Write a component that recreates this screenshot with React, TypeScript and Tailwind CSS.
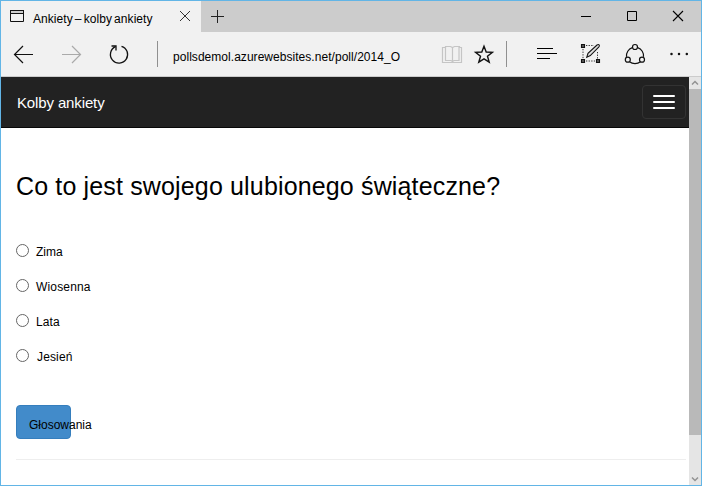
import React from "react";

type IconProps = { className: string; box: string; children: React.ReactNode };

function Icon({ className, box, children }: IconProps) {
  return (
    <svg viewBox={box} className={`block shrink-0 ${className}`} fill="none" stroke="#111" strokeWidth="1.2">
      {children}
    </svg>
  );
}

function TitleBar() {
  return (
    <div className="flex h-[31px] shrink-0 bg-[#cccccc]">
      <div className="flex w-[200px] shrink-0 bg-[#f1f1f1]">
        <Icon className="h-[31px] w-8" box="1 1 32 31">
          <path d="M10.5 10v11.5h13V10" strokeWidth="1" />
          <path d="M10 10.5h14M10 13.5h14" strokeWidth="1" />
          <path d="M11 12h12" stroke="#aaa" strokeWidth="1" />
        </Icon>
        <span className="w-[141px] whitespace-pre pt-[10px] text-[12px] leading-4 tracking-[0.06px] text-black [word-spacing:-1.3px]">Ankiety – kolby ankiety</span>
        <Icon className="h-[31px] w-[27px]" box="174 1 27 31">
          <path d="M180 11l10 10M190 11l-10 10" stroke="#333" strokeWidth="1" />
        </Icon>
      </div>
      <Icon className="h-[31px] w-8" box="201 1 32 31">
        <path d="M211 16.5h13M217.500 10v13" stroke="#222" strokeWidth="1" />
      </Icon>
      <Icon className="ml-auto h-[31px] w-[138px]" box="563 1 138 31">
        <path d="M581 16.500h10" stroke="#000" strokeWidth="1" />
        <path d="M627.500 11.500h9v9h-9z" stroke="#000" strokeWidth="1" />
        <path d="M673 11l10 10M683 11l-10 10" stroke="#000" strokeWidth="1.1" />
      </Icon>
    </div>
  );
}

function Toolbar() {
  return (
    <div className="flex h-[45px] shrink-0 border-b border-[#cccccc] bg-[#f1f1f1]">
      <Icon className="h-11 w-[45px]" box="1 32 45 44">
        <path d="M33 54.500H14.500M23 46l-8.500 8.500L23 63" />
      </Icon>
      <Icon className="h-11 w-[46px]" box="46 32 46 44">
        <path d="M62 54.500h18.500M72 46l8.500 8.500L72 63" stroke="#aaa" />
      </Icon>
      <Icon className="h-11 w-[52px]" box="92 32 52 44">
        <path d="M121.500 46.300A8.600 8.600 0 1 1 115.500 46.700" strokeWidth="1.3" />
        <path d="M111.500 46h4.500v4.500" strokeWidth="1.300" />
      </Icon>
      <Icon className="h-11 w-[29px]" box="144 32 29 44">
        <path d="M157.500 41v26" stroke="#909090" strokeWidth="1" />
      </Icon>
      <span className="w-[262px] whitespace-nowrap pt-[17px] text-[12px] leading-4 tracking-[0.04px] text-black">pollsdemol.azurewebsites.net/poll/2014_O</span>
      <Icon className="h-11 w-[34px]" box="435 32 34 44">
        <path d="M442.500 47.500h3v-1h5l2 1 2-1h5v1h2v15h-19z" stroke="#c5c5c5" />
        <path d="M445.500 47v13.500h5.500l1.500 1 1.500-1h5V47M452.500 47.500v14.500" stroke="#c5c5c5" />
      </Icon>
      <Icon className="h-11 w-[31px]" box="469 32 31 44">
        <path d="M484 46.200l2.200 5.800 6.200.3-4.900 3.900 1.700 6-5.200-3.400-5.200 3.400 1.700-6-4.900-3.900 6.200-.3z" strokeWidth="1.400" />
      </Icon>
      <Icon className="h-11 w-[25px]" box="500 32 25 44">
        <path d="M506.500 41v26" stroke="#909090" strokeWidth="1" />
      </Icon>
      <Icon className="h-11 w-[45px]" box="525 32 45 44">
        <path d="M537 48.500h16M537 53.500h20M537 58.500h13" stroke="#000" strokeWidth="1" />
      </Icon>
      <Icon className="h-11 w-[44px]" box="570 32 44 44">
        <path d="M586 45.500h8M583 49v10M586 61h9M597.500 52v7" stroke="#333" strokeWidth="1" strokeDasharray="1.300 1.300" />
        <path d="M581.500 44.500h3v3h-3zM581.500 59.500h3v3h-3zM596.500 59.500h3v3h-3z" fill="#555" strokeWidth="1.100" />
        <path d="M586.800 57.200l1.200-3.900 9-8.300q1.500-1 2.200 0 .6.900-.5 2.100l-8.400 8.500z" fill="#ddd" strokeWidth="1.100" />
      </Icon>
      <Icon className="h-11 w-[42px]" box="614 32 42 44">
        <path d="M632.300 47.600a8.700 8.700 0 0 0-5.800 9.300M637.700 47.600a8.700 8.700 0 0 1 5.800 9.300M629.500 61.700a8.800 8.800 0 0 0 11 0" />
        <circle cx="635" cy="47" r="2.500" />
        <circle cx="627.800" cy="59.700" r="2.500" />
        <circle cx="642" cy="59.700" r="2.500" />
      </Icon>
      <Icon className="h-11 w-[45px]" box="656 32 45 44">
        <g fill="#111" stroke="none">
          <circle cx="671.500" cy="54" r="1.250" />
          <circle cx="679" cy="54" r="1.250" />
          <circle cx="686.800" cy="54" r="1.250" />
        </g>
      </Icon>
    </div>
  );
}

function Scrollbar() {
  return (
    <div className="flex w-3 shrink-0 flex-col bg-[#e5e5e5]">
      <Icon className="h-3 w-3" box="0 0 12 12">
        <path d="M3 7.500l3-3 3 3" stroke="#929292" strokeWidth="1.500" />
      </Icon>
      <div className="h-[346px] bg-[#b9b9b9]" />
      <Icon className="mt-auto h-3 w-3" box="0 0 12 12">
        <path d="M3 4.500l3 3 3-3" stroke="#929292" strokeWidth="1.500" />
      </Icon>
    </div>
  );
}

const seasons = [
  { label: "Zima", style: "ml-[7px]" },
  { label: "Wiosenna", style: "ml-[7px] tracking-[0.16px]" },
  { label: "Lata", style: "ml-[7px] tracking-[0.1px]" },
  { label: "Jesień", style: "ml-[8px] tracking-[0.15px]" },
];

export default function App() {
  return (
    <div className="flex h-[486px] w-[702px] flex-col overflow-hidden border border-[#62b5e6] bg-white font-['Liberation_Sans',Arial,sans-serif]">
      <TitleBar />
      <Toolbar />
      <div className="flex min-h-0 flex-1">
        <div className="flex min-w-0 flex-1 flex-col">
          <nav className="flex h-[51px] shrink-0 items-start justify-between border-b border-[#080808] bg-[#222222] pl-4 pr-[3px]">
            <span className="whitespace-nowrap pt-[16px] text-[15px] leading-5 tracking-[-0.13px] text-white">Kolby ankiety</span>
            <button className="mt-2 flex h-[34px] w-[44px] flex-col items-center justify-center gap-1 rounded-[4px] border border-[#333333]">
              <span className="h-[2px] w-[22px] rounded-[1px] bg-white" />
              <span className="h-[2px] w-[22px] rounded-[1px] bg-white" />
              <span className="h-[2px] w-[22px] rounded-[1px] bg-white" />
            </button>
          </nav>
          <main className="flex flex-col pl-[15px] pr-[3px]">
            <h1 className="mt-[42px] h-8 whitespace-nowrap text-[25px] leading-8 tracking-[0.15px] text-black">Co to jest swojego ulubionego świąteczne?</h1>
            <div className="mt-[42px] flex flex-col gap-[22px]">
              {seasons.map(({ label, style }) => (
                <label key={label} className="flex h-[13px] items-center">
                  <span className="h-[13px] w-[13px] shrink-0 rounded-full border border-[#666666] bg-white" />
                  <span className={`whitespace-nowrap pt-[2px] text-[12px] leading-4 text-black ${style}`}>{label}</span>
                </label>
              ))}
            </div>
            <button className="mt-[43px] h-[34px] w-[55px] whitespace-nowrap rounded-[4px] border border-[#357ebd] bg-[#428bca] pl-3 pt-[6px] text-left text-[12px] leading-4 text-black">Głosowania</button>
            <div className="mt-5 h-px bg-[#eeeeee]" />
          </main>
        </div>
        <Scrollbar />
      </div>
    </div>
  );
}
